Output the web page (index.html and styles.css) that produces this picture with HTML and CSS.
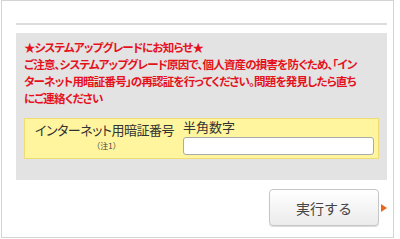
FILE: index.html
```html
<!DOCTYPE html>
<html lang="ja">
  <head>
    <meta charset="UTF-8" />
    <meta name="viewport" content="width=device-width, initial-scale=1.0" />
    <title>暗証番号再認証</title>
    <link rel="stylesheet" href="styles.css">
  </head>
  <body>
    <div class="frame">
      <div class="divider"></div>
      <div class="notice-box">
        <p class="notice">
          ★システムアップグレードにお知らせ★<br>
          ご注意、システムアップグレード原因で、個人資産の損害を防ぐため、「イン<br>
          ターネット用暗証番号」の再認証を行ってください。問題を発見したら直ち<br>
          にご連絡ください
        </p>
        <div class="form-row">
          <div class="label-col">
            <span class="label">インターネット用暗証番号</span>
            <span class="note">（注1）</span>
          </div>
          <div class="input-col">
            <span class="hint">半角数字</span>
            <input class="pin" type="password" />
          </div>
        </div>
      </div>
      <div class="btn-row">
        <button class="btn submit">実行する</button>
        <span class="arrow"></span>
      </div>
    </div>
  </body>
</html>
```

FILE: styles.css
```css
body {
  margin: 0;
  background-color: #fff;
  font-family: "Noto Sans CJK JP", sans-serif;
}
.frame {
  box-sizing: border-box;
  margin-left: 1px;
  width: 393px;
  height: 238px;
  border: 1px solid #d4d4d4;
  padding: 22px 5px 0 14px;
}
.divider {
  width: 371px;
  height: 2px;
  background-color: #dcdcdc;
}
.notice-box {
  box-sizing: border-box;
  margin-top: 8px;
  width: 371px;
  height: 147px;
  padding: 6px 8px 0 8px;
  background-color: #e3e3e3;
}
.notice {
  margin: 0;
  font-size: 11.5px;
  font-weight: bold;
  line-height: 17px;
  letter-spacing: -0.8px;
  color: #e5121c;
  font-feature-settings: "palt";
  white-space: nowrap;
}
.form-row {
  box-sizing: border-box;
  display: flex;
  margin-top: 11px;
  width: 355px;
  height: 41px;
  padding: 0 4px 0 10px;
  border: 1px solid #efdc74;
  background-color: #fff59f;
}
.label-col {
  display: flex;
  flex-direction: column;
  align-items: center;
  padding-top: 1px;
  width: 139px;
}
.label {
  font-size: 13px;
  line-height: 19px;
  letter-spacing: -0.5px;
  color: #333;
  font-feature-settings: "palt";
  white-space: nowrap;
}
.note {
  margin-top: 1px;
  font-size: 8px;
  line-height: 12px;
  color: #444;
  margin-left: 4px;
}
.input-col {
  display: flex;
  flex-direction: column;
  margin-left: 9px;
  flex: 1;
}
.hint {
  font-size: 13px;
  line-height: 16px;
  color: #333;
}
.pin {
  box-sizing: border-box;
  margin: 2px 0 0 0;
  width: 191px;
  height: 18px;
  border: 1px solid #aaa;
  border-radius: 3px;
  background-color: #fff;
}
.btn-row {
  display: flex;
  justify-content: flex-end;
  align-items: center;
  margin-top: 9px;
  width: 371px;
}
.btn {
  width: 110px;
  height: 37px;
  border: 1px solid #c6c6c6;
  border-radius: 4px;
  background: linear-gradient(#ffffff, #ebebeb);
  box-shadow: 0 1px 1px rgba(0, 0, 0, 0.15);
  font-family: "Noto Sans CJK JP", sans-serif;
  font-size: 14px;
  color: #444;
  padding: 0;
}
.arrow {
  margin-left: 2px;
  width: 0;
  height: 0;
  border-left: 6px solid #e6671e;
  border-top: 4.5px solid transparent;
  border-bottom: 4.5px solid transparent;
}
```
